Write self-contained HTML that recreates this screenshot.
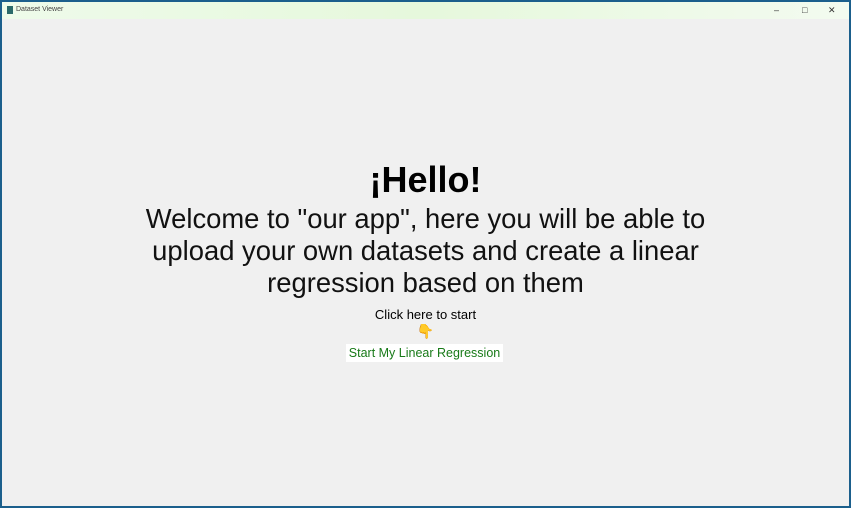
<!DOCTYPE html>
<html><head><meta charset="utf-8"><style>
html,body{margin:0;padding:0}
body{width:851px;height:508px;position:relative;overflow:hidden;background:#f0f0f0;font-family:"Liberation Sans",Arial,sans-serif}
.frame{position:absolute;left:0;top:0;width:847px;height:504px;border:2px solid #1b5f8c}
.title{position:absolute;left:2px;top:2px;width:847px;height:17px;background:linear-gradient(90deg,#eefbea,#e6f8dc 50%,#f3fbf0);}
.title .t{position:absolute;left:14px;top:4px;font-size:7px;color:#444}
.title .ic{position:absolute;left:5px;top:4px;width:6px;height:8px;background:#2a6a6a}
.ctl{position:absolute;top:3px;font-size:9px;color:#333}
.c{position:absolute;left:0;width:851px;text-align:center;color:#000;white-space:nowrap}
.h{top:160px;font-size:36px;font-weight:bold;line-height:40px}
.w{top:203px;font-size:27.4px;line-height:32px;color:#111}
.k{top:307px;font-size:13px}
.e{top:323px;font-size:14px;color:#f5a623}
.btn{position:absolute;left:346px;top:344px;width:157px;height:18px;background:#fff;color:#187a18;font-size:12.5px;line-height:18px;text-align:center;white-space:nowrap}
</style></head><body>
<div class="frame"></div>
<div class="title"><div class="ic"></div><div class="t">Dataset Viewer</div>
<div class="ctl" style="left:772px">&#8211;</div><div class="ctl" style="left:800px">&#9633;</div><div class="ctl" style="left:826px">&#10005;</div></div>
<div class="c h">¡Hello!</div>
<div class="c w">Welcome to "our app", here you will be able to<br>upload your own datasets and create a linear<br>regression based on them</div>
<div class="c k">Click here to start</div>
<div class="c e">👇</div>
<div class="btn">Start My Linear Regression</div>
</body></html>
